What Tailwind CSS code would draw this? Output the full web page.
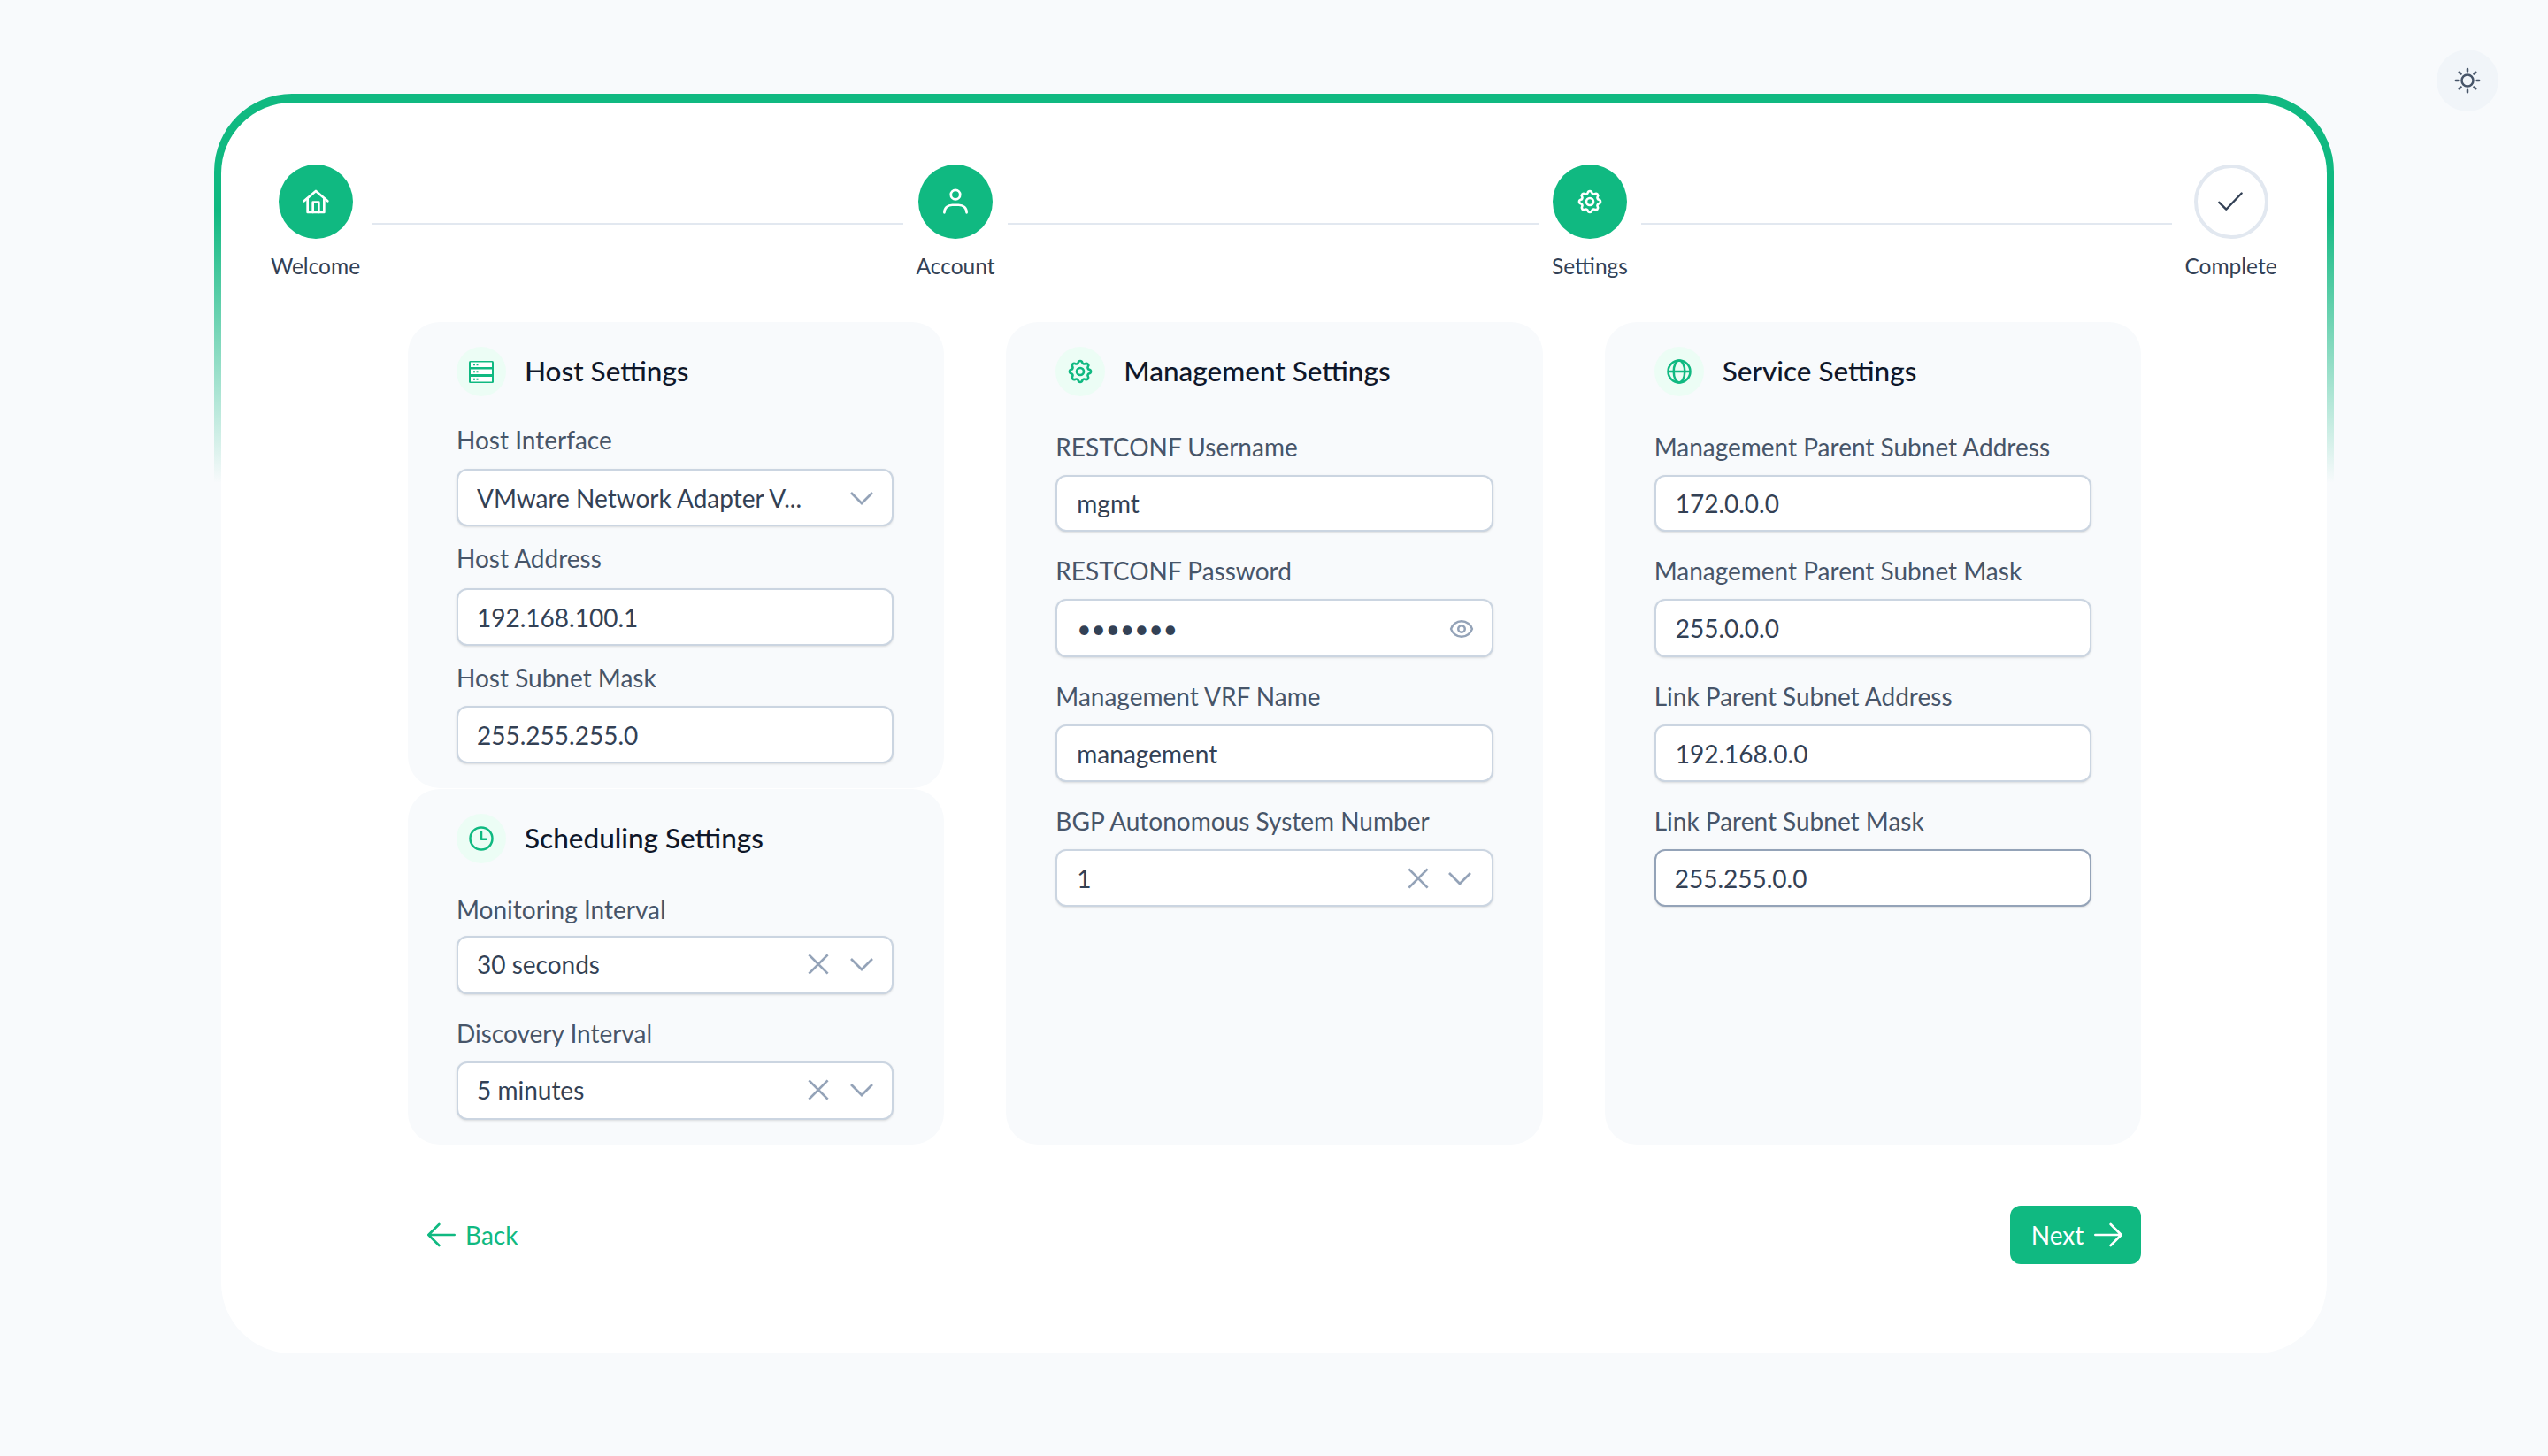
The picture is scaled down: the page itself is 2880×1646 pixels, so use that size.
<!doctype html>
<html lang="en">
<head>
    <meta charset="UTF-8">
    <title>Setup Wizard</title>
    <script src="https://cdn.jsdelivr.net/npm/@tailwindcss/browser@4"></script>
</head>
<body class="bg-[#f8fafc] min-h-screen font-['Lato',sans-serif] text-[#334155]">
    <!-- theme toggle -->
    <button class="absolute left-[2754px] top-[56px] w-[70px] h-[70px] rounded-full bg-[#f1f5f9] flex items-center justify-center text-[#475569]">
        <svg class="w-[30px] h-[30px]" viewBox="0 0 24 24" fill="none" stroke="currentColor" stroke-width="2" stroke-linecap="round"><circle cx="12" cy="12" r="5.2"/><path d="M12 1.5v2M12 20.5v2M1.5 12h2M20.5 12h2M4.6 4.6l1.4 1.4M18 18l1.4 1.4M4.6 19.4L6 18M18 6l1.4-1.4"/></svg>
    </button>

    <div class="relative ml-[242px] w-[2396px] pt-[106px]">
        <!-- green fade on the card's top edge -->
        <div class="absolute left-0 right-0 top-[106px] h-[440px] rounded-t-[88px] bg-gradient-to-b from-[#10b981] from-30% to-transparent"></div>

        <div class="relative mx-[8px] mt-[10px] h-[1414px] rounded-t-[80px] rounded-b-[80px] bg-white pt-[70px] px-[56px]">
            <!-- stepper -->
            <div class="flex items-start">
                <div class="flex flex-col items-center w-[101px]">
                    <div class="w-[84px] h-[84px] rounded-full bg-[#10b981] text-white flex items-center justify-center">
                        <svg class="w-[32px] h-[32px]" viewBox="0 0 24 24" fill="none" stroke="currentColor" stroke-width="2" stroke-linecap="round" stroke-linejoin="round"><path d="M2 11.5L12 3l10 8.5"/><path d="M5 9.5V21h14V9.5"/><path d="M9.5 21v-8.5h5V21"/></svg>
                    </div>
                    <span class="mt-[16px] text-[24.5px] leading-[30px] whitespace-nowrap">Welcome</span>
                </div>
                <div class="flex-1 h-[2px] mt-[66px] mx-[14px] bg-[#e2e8f0]"></div>
                <div class="flex flex-col items-center w-[90px]">
                    <div class="w-[84px] h-[84px] rounded-full bg-[#10b981] text-white flex items-center justify-center">
                        <svg class="w-[36px] h-[36px]" viewBox="0 0 24 24" fill="none" stroke="currentColor" stroke-width="1.8" stroke-linecap="round"><circle cx="12" cy="6.700" r="3.500"/><path d="M3.600 20.200c0-3.400 2.600-5.700 6-5.700h4.800c3.400 0 6 2.300 6 5.700"/></svg>
                    </div>
                    <span class="mt-[16px] text-[24.5px] leading-[30px] whitespace-nowrap">Account</span>
                </div>
                <div class="flex-1 h-[2px] mt-[66px] mx-[14px] bg-[#e2e8f0]"></div>
                <div class="flex flex-col items-center w-[88px]">
                    <div class="w-[84px] h-[84px] rounded-full bg-[#10b981] text-white flex items-center justify-center">
                        <svg class="w-[32px] h-[32px]" viewBox="0 0 24 24" fill="none" stroke="currentColor" stroke-width="2" stroke-linecap="round" stroke-linejoin="round"><path d="M10.325 4.317c.426-1.756 2.924-1.756 3.350 0a1.724 1.724 0 002.573 1.066c1.543-.940 3.310.826 2.370 2.370a1.724 1.724 0 001.065 2.572c1.756.426 1.756 2.924 0 3.350a1.724 1.724 0 00-1.066 2.573c.940 1.543-.826 3.310-2.370 2.370a1.724 1.724 0 00-2.572 1.065c-.426 1.756-2.924 1.756-3.350 0a1.724 1.724 0 00-2.573-1.066c-1.543.940-3.310-.826-2.370-2.370a1.724 1.724 0 00-1.065-2.572c-1.756-.426-1.756-2.924 0-3.350a1.724 1.724 0 001.066-2.573c-.940-1.543.826-3.310 2.370-2.370.996.608 2.296.070 2.572-1.065z"/><circle cx="12" cy="12" r="3"/></svg>
                    </div>
                    <span class="mt-[16px] text-[24.5px] leading-[30px] whitespace-nowrap">Settings</span>
                </div>
                <div class="flex-1 h-[2px] mt-[66px] mx-[14px] bg-[#e2e8f0]"></div>
                <div class="flex flex-col items-center w-[105px]">
                    <div class="w-[84px] h-[84px] rounded-full border-4 border-[#e2e8f0] text-[#334155] flex items-center justify-center">
                        <svg class="w-[38px] h-[38px] -ml-[2px]" viewBox="0 0 24 24" fill="none" stroke="currentColor" stroke-width="1.5" stroke-linecap="round" stroke-linejoin="round"><path d="M4 12.500l5 5L20 6"/></svg>
                    </div>
                    <span class="mt-[16px] text-[24.5px] leading-[30px] whitespace-nowrap">Complete</span>
                </div>
            </div>

            <!-- form columns -->
            <div class="mt-[48px] ml-[155px] mr-[154px] grid grid-cols-3 gap-x-[70px] h-[930px]">
                <div class="flex flex-col">
                    <section class="h-[527px] rounded-[36px] bg-[#f8fafc] pl-[55px] pr-[57px] pt-[28px]">
                        <div class="flex items-center gap-[21px] h-[56px]">
                            <div class="w-[56px] h-[56px] rounded-full bg-[#ecfdf5] text-[#10b981] flex items-center justify-center">
                                <svg class="w-[28px] h-[25px]" viewBox="0 0 28 25"><rect width="28" height="25" rx="1.500" fill="currentColor"/><rect x="2" y="1.500" width="24" height="5.500" fill="white"/><rect x="2" y="9.500" width="24" height="5.500" fill="white"/><rect x="2" y="18" width="24" height="5.500" fill="white"/><path d="M5 3.300h2v2H5zM8.500 3.300h2v2h-2zM5 11.300h2v2H5zM8.500 11.300h2v2h-2zM5 19.800h2v2H5zM8.500 19.800h2v2h-2z" fill="currentColor"/></svg>
                            </div>
                            <h2 class="text-[31.5px] font-medium text-[#0f172a]">Host Settings</h2>
                        </div>
                        <label class="block mt-[31px] text-[28px] leading-[36px] text-[#475569]">Host Interface</label>
                        <div class="mt-[15px] h-[65px] rounded-[12px] border-2 border-[#cbd5e1] bg-white shadow-sm flex items-center pl-[21px] pr-[18px] text-[28px]">
                            <span class="flex-1 truncate">VMware Network Adapter V...</span>
                            <svg class="w-[32px] h-[32px] text-[#94a3b8]" viewBox="0 0 24 24" fill="none" stroke="currentColor" stroke-width="2"><path d="M3 7.500l9 9 9-9"/></svg>
                        </div>
                        <label class="block mt-[18px] text-[28px] leading-[36px] text-[#475569]">Host Address</label>
                        <input class="block w-full mt-[16px] h-[65px] rounded-[12px] border-2 border-[#cbd5e1] bg-white shadow-sm px-[21px] text-[28px]" value="192.168.100.1">
                        <label class="block mt-[18px] text-[28px] leading-[36px] text-[#475569]">Host Subnet Mask</label>
                        <input class="block w-full mt-[14px] h-[65px] rounded-[12px] border-2 border-[#cbd5e1] bg-white shadow-sm px-[21px] text-[28px]" value="255.255.255.0">
                    </section>
                    <section class="h-[402px] mt-[1px] rounded-[36px] bg-[#f8fafc] pl-[55px] pr-[57px] pt-[28px]">
                        <div class="flex items-center gap-[21px] h-[56px]">
                            <div class="w-[56px] h-[56px] rounded-full bg-[#ecfdf5] text-[#10b981] flex items-center justify-center">
                                <svg class="w-[30px] h-[30px]" viewBox="0 0 24 24" fill="none" stroke="currentColor" stroke-width="2" stroke-linecap="round" stroke-linejoin="round"><circle cx="12" cy="12" r="10"/><path d="M12 6v6.500h4.500"/></svg>
                            </div>
                            <h2 class="text-[31.5px] font-medium text-[#0f172a]">Scheduling Settings</h2>
                        </div>
                        <label class="block mt-[34px] text-[28px] leading-[36px] text-[#475569]">Monitoring Interval</label>
                        <div class="mt-[12px] h-[66px] rounded-[12px] border-2 border-[#cbd5e1] bg-white shadow-sm flex items-center pl-[21px] pr-[18px] pb-[2px] text-[28px]">
                            <span class="flex-1 truncate">30 seconds</span>
                            <svg class="w-[30px] h-[30px] mr-[18px] text-[#94a3b8]" viewBox="0 0 24 24" fill="none" stroke="currentColor" stroke-width="2.200"><path d="M3.500 3.500l17 17M20.500 3.500l-17 17"/></svg>
                            <svg class="w-[32px] h-[32px] text-[#94a3b8]" viewBox="0 0 24 24" fill="none" stroke="currentColor" stroke-width="2"><path d="M3 7.500l9 9 9-9"/></svg>
                        </div>
                        <label class="block mt-[26px] text-[28px] leading-[36px] text-[#475569]">Discovery Interval</label>
                        <div class="mt-[14px] h-[66px] rounded-[12px] border-2 border-[#cbd5e1] bg-white shadow-sm flex items-center pl-[21px] pr-[18px] pb-[2px] text-[28px]">
                            <span class="flex-1 truncate">5 minutes</span>
                            <svg class="w-[30px] h-[30px] mr-[18px] text-[#94a3b8]" viewBox="0 0 24 24" fill="none" stroke="currentColor" stroke-width="2.200"><path d="M3.500 3.500l17 17M20.500 3.500l-17 17"/></svg>
                            <svg class="w-[32px] h-[32px] text-[#94a3b8]" viewBox="0 0 24 24" fill="none" stroke="currentColor" stroke-width="2"><path d="M3 7.500l9 9 9-9"/></svg>
                        </div>
                    </section>
                </div>

                <section class="rounded-[36px] bg-[#f8fafc] px-[56px] pt-[28px]">
                    <div class="flex items-center gap-[21px] h-[56px]">
                        <div class="w-[56px] h-[56px] rounded-full bg-[#ecfdf5] text-[#10b981] flex items-center justify-center">
                            <svg class="w-[32px] h-[32px]" viewBox="0 0 24 24" fill="none" stroke="currentColor" stroke-width="2" stroke-linecap="round" stroke-linejoin="round"><path d="M10.325 4.317c.426-1.756 2.924-1.756 3.350 0a1.724 1.724 0 002.573 1.066c1.543-.940 3.310.826 2.370 2.370a1.724 1.724 0 001.065 2.572c1.756.426 1.756 2.924 0 3.350a1.724 1.724 0 00-1.066 2.573c.940 1.543-.826 3.310-2.370 2.370a1.724 1.724 0 00-2.572 1.065c-.426 1.756-2.924 1.756-3.350 0a1.724 1.724 0 00-2.573-1.066c-1.543.940-3.310-.826-2.370-2.370a1.724 1.724 0 00-1.065-2.572c-1.756-.426-1.756-2.924 0-3.350a1.724 1.724 0 001.066-2.573c-.940-1.543.826-3.310 2.370-2.370.996.608 2.296.070 2.572-1.065z"/><circle cx="12" cy="12" r="3"/></svg>
                        </div>
                        <h2 class="text-[31.5px] font-medium text-[#0f172a]">Management Settings</h2>
                    </div>
                    <label class="block mt-[39px] text-[28px] leading-[36px] text-[#475569]">RESTCONF Username</label>
                    <input class="block w-full mt-[14px] h-[64px] rounded-[12px] border-2 border-[#cbd5e1] bg-white shadow-sm px-[22px] text-[28px]" value="mgmt">
                    <label class="block mt-[26px] text-[28px] leading-[36px] text-[#475569]">RESTCONF Password</label>
                    <div class="relative mt-[14px]">
                        <input type="password" class="block w-full h-[66px] rounded-[12px] border-2 border-[#cbd5e1] bg-white shadow-sm px-[22px] text-[28px]" value="1234567">
                        <svg class="absolute right-[21px] top-[19px] w-[30px] h-[30px] text-[#94a3b8]" viewBox="0 0 24 24" fill="none" stroke="currentColor" stroke-width="2" stroke-linejoin="round"><path d="M2.458 12C3.732 7.943 7.523 5 12 5c4.478 0 8.268 2.943 9.542 7-1.274 4.057-5.064 7-9.542 7-4.477 0-8.268-2.943-9.542-7z"/><circle cx="12" cy="12" r="3"/></svg>
                    </div>
                    <label class="block mt-[26px] text-[28px] leading-[36px] text-[#475569]">Management VRF Name</label>
                    <input class="block w-full mt-[14px] h-[65px] rounded-[12px] border-2 border-[#cbd5e1] bg-white shadow-sm px-[22px] text-[28px]" value="management">
                    <label class="block mt-[26px] text-[28px] leading-[36px] text-[#475569]">BGP Autonomous System Number</label>
                    <div class="mt-[14px] h-[65px] rounded-[12px] border-2 border-[#cbd5e1] bg-white shadow-sm flex items-center pl-[22px] pr-[20px] text-[28px]">
                        <span class="flex-1 truncate">1</span>
                        <svg class="w-[30px] h-[30px] mr-[16px] text-[#94a3b8]" viewBox="0 0 24 24" fill="none" stroke="currentColor" stroke-width="2.200"><path d="M3.500 3.500l17 17M20.500 3.500l-17 17"/></svg>
                        <svg class="w-[32px] h-[32px] text-[#94a3b8]" viewBox="0 0 24 24" fill="none" stroke="currentColor" stroke-width="2"><path d="M3 7.500l9 9 9-9"/></svg>
                    </div>
                </section>

                <section class="rounded-[36px] bg-[#f8fafc] px-[56px] pt-[28px]">
                    <div class="flex items-center gap-[21px] h-[56px]">
                        <div class="w-[56px] h-[56px] rounded-full bg-[#ecfdf5] text-[#10b981] flex items-center justify-center">
                            <svg class="w-[30px] h-[30px]" viewBox="0 0 24 24" fill="none" stroke="currentColor" stroke-width="2"><circle cx="12" cy="12" r="10"/><ellipse cx="12" cy="12" rx="5" ry="10"/><path d="M2 12h20"/></svg>
                        </div>
                        <h2 class="text-[31.5px] font-medium text-[#0f172a]">Service Settings</h2>
                    </div>
                    <label class="block mt-[39px] text-[28px] leading-[36px] text-[#475569]">Management Parent Subnet Address</label>
                    <input class="block w-full mt-[14px] h-[64px] rounded-[12px] border-2 border-[#cbd5e1] bg-white shadow-sm px-[22px] text-[28px]" value="172.0.0.0">
                    <label class="block mt-[26px] text-[28px] leading-[36px] text-[#475569]">Management Parent Subnet Mask</label>
                    <input class="block w-full mt-[14px] h-[66px] rounded-[12px] border-2 border-[#cbd5e1] bg-white shadow-sm px-[22px] text-[28px]" value="255.0.0.0">
                    <label class="block mt-[26px] text-[28px] leading-[36px] text-[#475569]">Link Parent Subnet Address</label>
                    <input class="block w-full mt-[14px] h-[65px] rounded-[12px] border-2 border-[#cbd5e1] bg-white shadow-sm px-[22px] text-[28px]" value="192.168.0.0">
                    <label class="block mt-[26px] text-[28px] leading-[36px] text-[#475569]">Link Parent Subnet Mask</label>
                    <input class="block w-full mt-[14px] h-[65px] rounded-[12px] border-2 border-[#94a3b8] bg-white shadow-sm px-[21px] text-[28px]" value="255.255.0.0">
                </section>
            </div>

            <!-- footer actions -->
            <div class="mt-[69px] ml-[155px] mr-[154px] flex items-center justify-between">
                <button class="flex items-center gap-[11px] pl-[22px] text-[28px] text-[#10b981]">
                    <svg class="w-[32px] h-[32px]" viewBox="0 0 24 24" fill="none" stroke="currentColor" stroke-width="2" stroke-linecap="round" stroke-linejoin="round"><path d="M23 12H1.500M10 3l-9 9 9 9"/></svg>
                    Back
                </button>
                <button class="flex items-center justify-center gap-[12px] pl-[3px] w-[148px] h-[66px] rounded-[12px] bg-[#10b981] text-white text-[28px]">
                    Next
                    <svg class="w-[32px] h-[32px]" viewBox="0 0 24 24" fill="none" stroke="currentColor" stroke-width="2" stroke-linecap="round" stroke-linejoin="round"><path d="M1 12h21.500M14 3l9 9-9 9"/></svg>
                </button>
            </div>
        </div>
    </div>
</body>
</html>
